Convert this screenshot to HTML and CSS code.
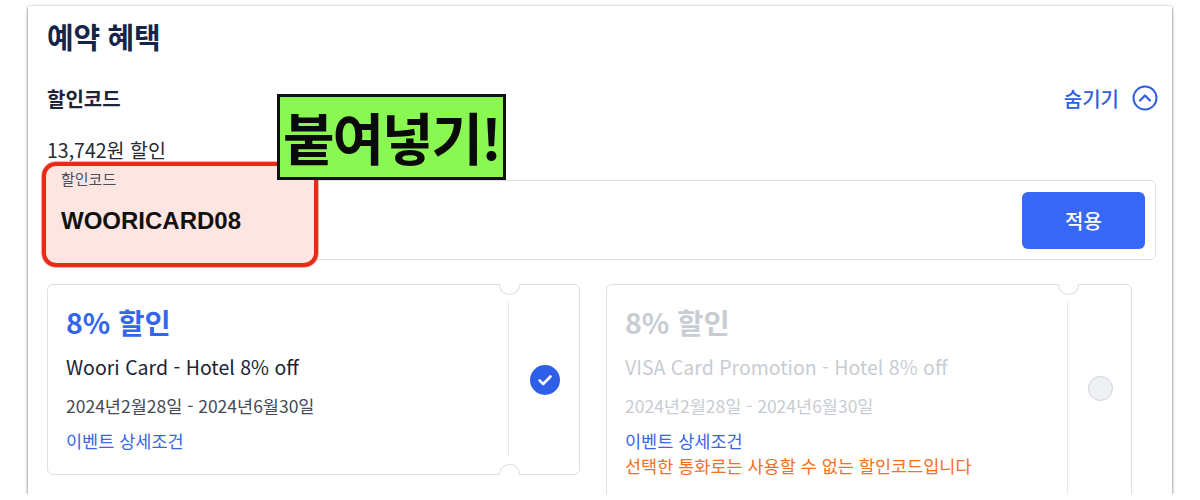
FILE: index.html
```html
<!DOCTYPE html>
<html lang="ko">
<head>
<meta charset="utf-8">
<link rel="stylesheet" href="styles.css">
</head>
<body>
<div class="panel">
  <h1 class="title">예약 혜택</h1>
  <div class="row">
    <div class="sub">할인코드</div>
    <div class="hide">숨기기
      <svg class="chev" width="26" height="26" viewBox="0 0 26 26"><circle cx="13" cy="13" r="11.5" fill="none" stroke="#2f5fe0" stroke-width="2"/><path d="M8 15.5 L13 10.5 L18 15.5" fill="none" stroke="#2f5fe0" stroke-width="2.2" stroke-linecap="round" stroke-linejoin="round"/></svg>
    </div>
  </div>
  <div class="amount">13,742원 할인</div>
  <div class="field">
    <div class="mark"></div>
    <span class="legend">할인코드</span>
    <span class="value">WOORICARD08</span>
    <button class="apply">적용</button>
    <div class="sticker">붙여넣기!</div>
  </div>
  <div class="coupons">
    <div class="coupon c1">
      <div class="info">
        <div class="pct">8% 할인</div>
        <div class="name">Woori Card - Hotel 8% off</div>
        <div class="date">2024년2월28일 - 2024년6월30일</div>
        <div class="link">이벤트 상세조건</div>
      </div>
      <div class="side">
        <svg width="30" height="30" viewBox="0 0 30 30"><circle cx="15" cy="15" r="15" fill="#2f5fe8"/><path d="M9.5 15.3 L13.2 19 L20.5 11.5" fill="none" stroke="#fff" stroke-width="2.6" stroke-linecap="round" stroke-linejoin="round"/></svg>
      </div>
    </div>
    <div class="coupon c2 off">
      <div class="info">
        <div class="pct">8% 할인</div>
        <div class="name">VISA Card Promotion - Hotel 8% off</div>
        <div class="date">2024년2월28일 - 2024년6월30일</div>
        <div class="link">이벤트 상세조건</div>
        <div class="warn">선택한 통화로는 사용할 수 없는 할인코드입니다</div>
      </div>
      <div class="side">
        <span class="radio"></span>
      </div>
    </div>
  </div>
</div>
</body>
</html>
```
FILE: styles.css
```css
* { box-sizing: border-box; }
html, body { margin: 0; padding: 0; background: #fff; }
body {
  font-family: "Noto Sans CJK KR", "Noto Sans", sans-serif;
  color: #1b2540;
}
.panel {
  position: relative;
  margin: 6px 0 0 28px;
  width: 1144px;
  height: 488px;
  overflow: hidden;
  background: #fff;
  padding: 12px 14px 0 19px;
  box-shadow: 0 2px 3px rgba(0,0,0,.45), 0 0 2px rgba(0,0,0,.3);
}
.title {
  margin: 0;
  font-size: 29px;
  line-height: 36px;
  font-weight: 700;
  color: #15244a;
  letter-spacing: -0.3px;
}
.row {
  margin-top: 30px;
  display: flex;
  justify-content: space-between;
  align-items: center;
  height: 28px;
}
.sub {
  font-size: 20px;
  font-weight: 700;
  color: #1d2436;
}
.hide {
  display: flex;
  align-items: center;
  gap: 13px;
  font-size: 20px;
  font-weight: 500;
  color: #2f5fe0;
}
.amount {
  margin-top: 26px;
  font-size: 19.5px;
  line-height: 24px;
  color: #252a36;
}
.field {
  position: relative;
  margin-top: 18px;
  width: 1109px;
  height: 80px;
  border: 1px solid #dfe1e5;
  border-radius: 5px;
  display: flex;
  align-items: center;
  justify-content: space-between;
  padding: 0 10px 0 13px;
}
.mark {
  position: absolute;
  left: -6px;
  top: -19px;
  width: 276px;
  height: 105px;
  border: 4px solid #ea2a17;
  border-radius: 14px;
  background: #fde6e2;
  box-shadow: 0 0 0 1px rgba(234, 42, 23, .35);
  z-index: 0;
}
.legend {
  position: absolute;
  left: 9px;
  top: -13px;
  padding: 0 4px;
  font-size: 15px;
  line-height: 22px;
  color: #4a4f5a;
  z-index: 1;
}
.value {
  position: relative;
  z-index: 1;
  font-family: "Liberation Sans", Arial, sans-serif;
  font-weight: 700;
  font-size: 24px;
  color: #111;
  margin-top: 1px;
}
.apply {
  width: 123px;
  height: 57px;
  border: 0;
  border-radius: 6px;
  background: #3767f5;
  color: #fff;
  font-family: "Noto Sans CJK KR", sans-serif;
  font-size: 20px;
  font-weight: 500;
}
.sticker {
  position: absolute;
  left: 229px;
  top: -87px;
  width: 229px;
  height: 86px;
  background: #8af853;
  border: 3px solid #111;
  color: #0a0a0a;
  font-size: 56px;
  font-weight: 700;
  line-height: 78px;
  text-align: center;
  letter-spacing: -2px;
  white-space: nowrap;
  z-index: 2;
}
.coupons {
  margin-top: 24px;
  display: flex;
  align-items: flex-start;
  gap: 26px;
}
.coupon {
  position: relative;
  display: flex;
  border: 1px solid #dcdfe4;
  border-radius: 6px;
  background: #fff;
}
.c1 { width: 533px; height: 191px; }
.c2 { width: 526px; height: 222px; }
.info {
  flex: 1;
  padding: 20px 0 0 18px;
  white-space: nowrap;
}
.pct {
  font-size: 28.5px;
  line-height: 34px;
  font-weight: 700;
  color: #3266ee;
}
.name {
  margin-top: 15px;
  font-size: 19.5px;
  line-height: 26px;
  color: #1c2333;
}
.date {
  margin-top: 14px;
  font-size: 17.5px;
  line-height: 24px;
  color: #444a56;
}
.link {
  margin-top: 11px;
  font-size: 17.5px;
  line-height: 24px;
  color: #3a66e6;
}
.warn {
  margin-top: 1px;
  font-size: 17.5px;
  line-height: 24px;
  color: #f2701f;
}
.off .pct, .off .name, .off .date { color: #c8ccd3; }
.side {
  position: relative;
  width: 71px;
  flex: none;
  margin: 17px 0;
  border-left: 1px solid #e6e8ec;
  display: flex;
  align-items: center;
  justify-content: center;
  padding-left: 2px;
}
.c2 .side {
  width: 64px;
  margin-bottom: 0;
  align-items: flex-start;
  padding-top: 74px;
}
.side::before, .side::after {
  content: "";
  position: absolute;
  left: -10px;
  width: 19px;
  height: 10px;
  background: #fff;
  border: 1px solid #dcdfe4;
}
.side::before {
  top: -18px;
  border-top: 0;
  border-radius: 0 0 10px 10px;
}
.side::after {
  bottom: -18px;
  border-bottom: 0;
  border-radius: 10px 10px 0 0;
}
.radio {
  width: 25px;
  height: 25px;
  border-radius: 50%;
  background: #eef0f3;
  border: 1px solid #cfd3d9;
}
```
